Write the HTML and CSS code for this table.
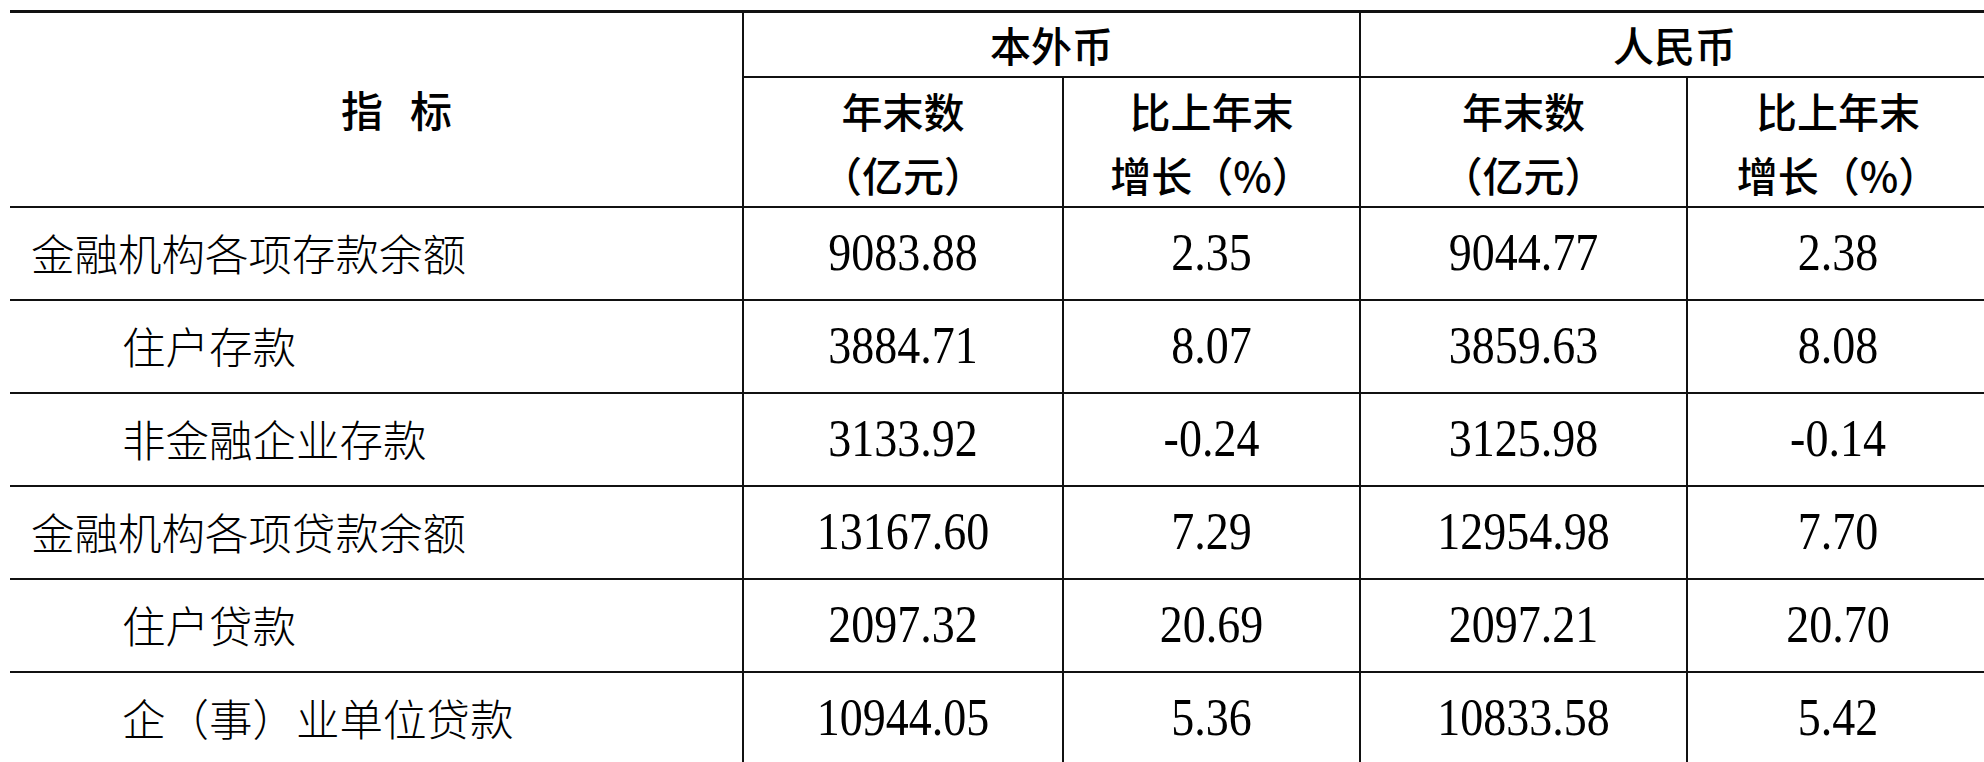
FILE: index.html
```html
<!DOCTYPE html>
<html lang="zh-CN">
<head>
<meta charset="utf-8">
<title>存贷款</title>
<link rel="stylesheet" href="styles.css">
</head>
<body>
<table class="stats">
  <colgroup>
    <col class="c-name">
    <col class="c-a">
    <col class="c-b">
    <col class="c-c">
    <col class="c-d">
  </colgroup>
  <thead>
    <tr class="h1">
      <th rowspan="2" class="th-name">指标</th>
      <th colspan="2">本外币</th>
      <th colspan="2" class="last">人民币</th>
    </tr>
    <tr class="h2">
      <th><span class="ln">年末数</span><span class="ln">（亿元）</span></th>
      <th><span class="ln">比上年末</span><span class="ln">增长（%）</span></th>
      <th><span class="ln">年末数</span><span class="ln">（亿元）</span></th>
      <th class="last"><span class="ln">比上年末</span><span class="ln">增长（%）</span></th>
    </tr>
  </thead>
  <tbody>
    <tr>
      <td class="name">金融机构各项存款余额</td>
      <td><span class="num">9083.88</span></td><td><span class="num">2.35</span></td><td><span class="num">9044.77</span></td><td class="last"><span class="num">2.38</span></td>
    </tr>
    <tr>
      <td class="name sub">住户存款</td>
      <td><span class="num">3884.71</span></td><td><span class="num">8.07</span></td><td><span class="num">3859.63</span></td><td class="last"><span class="num">8.08</span></td>
    </tr>
    <tr>
      <td class="name sub">非金融企业存款</td>
      <td><span class="num">3133.92</span></td><td><span class="num">-0.24</span></td><td><span class="num">3125.98</span></td><td class="last"><span class="num">-0.14</span></td>
    </tr>
    <tr>
      <td class="name">金融机构各项贷款余额</td>
      <td><span class="num">13167.60</span></td><td><span class="num">7.29</span></td><td><span class="num">12954.98</span></td><td class="last"><span class="num">7.70</span></td>
    </tr>
    <tr>
      <td class="name sub">住户贷款</td>
      <td><span class="num">2097.32</span></td><td><span class="num">20.69</span></td><td><span class="num">2097.21</span></td><td class="last"><span class="num">20.70</span></td>
    </tr>
    <tr>
      <td class="name sub">企（事）业单位贷款</td>
      <td><span class="num">10944.05</span></td><td><span class="num">5.36</span></td><td><span class="num">10833.58</span></td><td class="last"><span class="num">5.42</span></td>
    </tr>
  </tbody>
</table>
</body>
</html>
```

FILE: styles.css
```css
html, body {
  margin: 0;
  padding: 0;
  background: #fff;
  overflow: hidden;
}

body {
  width: 1984px;
  height: 762px;
}

.stats {
  margin: 10px 0 0 10px;
  border-collapse: collapse;
  table-layout: fixed;
  width: 1978px;
  color: #000;
  font-family: "Liberation Serif", "Noto Sans CJK SC", serif;
  font-size: 46px;
}

.c-name { width: 733px; }
.c-a { width: 320px; }
.c-b { width: 297px; }
.c-c { width: 327px; }
.c-d { width: 301px; }

.stats th,
.stats td {
  border: 2px solid #111;
  padding: 0;
  text-align: center;
  vertical-align: middle;
  line-height: 1;
}

.stats th.th-name,
.stats td.name {
  border-left: none;
}

.stats .last {
  border-right: none;
}

.stats thead tr:first-child th {
  border-top-width: 3px;
}

.stats th {
  font-family: "Noto Sans CJK SC", sans-serif;
  font-weight: 500;
  font-size: 41px;
}

.h1 { height: 65px; }
.h2 { height: 124px; }

.stats th.th-name {
  padding-left: 68px;
  letter-spacing: 27px;
  font-size: 42px;
}

.ln {
  display: block;
  line-height: 64px;
}

.stats tbody tr { height: 93px; }

.num {
  display: inline-block;
  transform: scaleY(1.14);
}

.stats td.name {
  text-align: left;
  padding-left: 21px;
  font-family: "Noto Sans CJK SC", sans-serif;
  font-weight: 300;
  font-size: 43.5px;
}

.stats td.name.sub {
  padding-left: 112px;
}
```
